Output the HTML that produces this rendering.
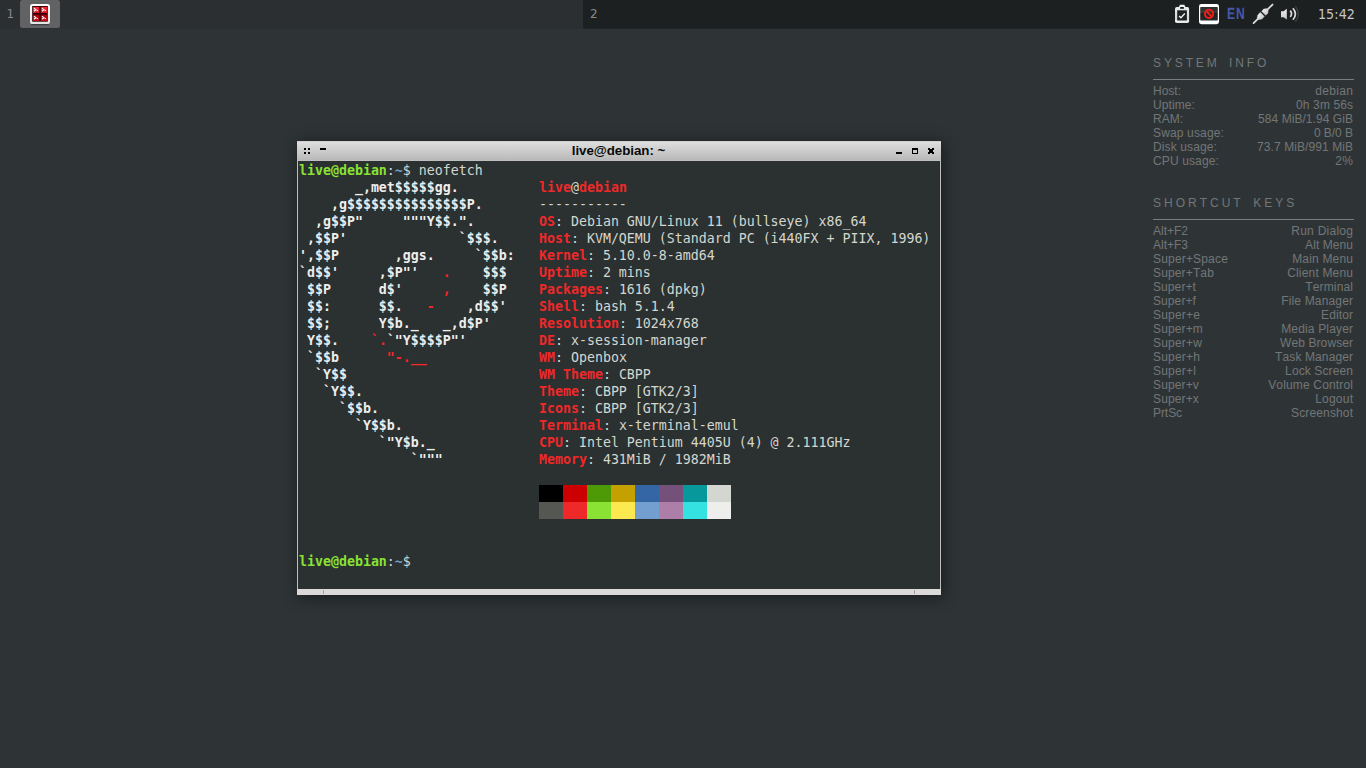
<!DOCTYPE html>
<html><head><meta charset="utf-8"><title>desktop</title>
<style>
*{margin:0;padding:0;box-sizing:border-box}
html,body{width:1366px;height:768px;overflow:hidden;background:#2e3436}
body{position:relative;font-family:"Liberation Sans",sans-serif}
#panel{position:absolute;left:0;top:0;width:1366px;height:28px;background:#1c2021}
#pb{position:absolute;left:0;top:28px;width:1366px;height:1px;background:linear-gradient(90deg,#2c3032 583px,#222628 583px)}
#d1{position:absolute;left:0;top:0;width:583px;height:28px;background:#2b2f31}
.dn{position:absolute;top:6px;font-family:"DejaVu Sans",sans-serif;font-size:12px;line-height:16px;color:#868989}
#task{position:absolute;left:20px;top:0;width:40px;height:28px;background:#606264;border-radius:2.5px}
#clock{position:absolute;left:1317.9px;top:5px;font-family:"DejaVu Sans",sans-serif;font-stretch:condensed;font-size:14.1px;letter-spacing:0.12px;line-height:18px;color:#c6c7c7;white-space:pre}
#lang{position:absolute;left:1227.2px;top:4.2px;font-family:"Liberation Sans",sans-serif;font-weight:bold;font-size:15.5px;line-height:18px;color:#4658aa;transform:rotate(0.03deg) scale(0.78,1.045);transform-origin:0 0;letter-spacing:1.2px;white-space:pre}
#win{position:absolute;left:297px;top:141px;width:644px;height:454px;background:#dcdad8;box-shadow:2px 2px 14px 1px rgba(0,0,0,.46)}
#tb{position:absolute;left:0;top:0;width:644px;height:20px;background:linear-gradient(#dedede,#b9b9b9);border-top:1px solid #d2cfcc;border-bottom:1px solid #bfbfbf}
#title{position:absolute;left:274.8px;top:1px;font-weight:bold;font-size:13.33px;letter-spacing:-0.05px;line-height:15px;color:#0a0a0a;white-space:pre;font-kerning:none}
#term{position:absolute;left:1px;top:20px;width:642px;height:428px;background:#2b3031;overflow:hidden;font-family:"DejaVu Sans Mono",monospace;font-size:13.288px}
.ln{position:absolute;white-space:pre;line-height:17px;height:17px}
.w{color:#eeeeec;font-weight:bold}.r{color:#ef2929;font-weight:bold}.n{color:#d3d7cf}.g{color:#8ae234;font-weight:bold}.b{color:#729fcf;font-weight:bold}
.sw{position:absolute;width:24px;height:17px}
.px{position:absolute;background:#000}
#conky{position:absolute;left:1153px;top:0;width:200px;color:#737677;font-size:12px}
.ct{position:absolute;left:0;font-size:12px;line-height:14px;white-space:pre;font-kerning:none}
.hr{position:absolute;left:0;width:201px;height:1px;background:#7b7e7f}
.cl{position:absolute;left:0;width:200px;line-height:14px;height:14px;white-space:pre;font-kerning:none}
.rt{position:absolute;right:0;top:0}
</style></head><body>
<div id="pb"></div>
<div id="panel"><div id="d1"></div>
<div class="dn" style="left:6.6px">1</div><div class="dn" style="left:590px">2</div>
<div id="task"></div>
<svg id="picons" width="1366" height="28" viewBox="0 0 1366 28" style="position:absolute;left:0;top:0">
<defs>
<linearGradient id="gw" x1="0" y1="0" x2="0" y2="1"><stop offset="0" stop-color="#ffffff"/><stop offset="1" stop-color="#e4e4e4"/></linearGradient>
<linearGradient id="gr1" x1="0" y1="0" x2="0" y2="1"><stop offset="0" stop-color="#f22c38"/><stop offset="1" stop-color="#dc1424"/></linearGradient>
<linearGradient id="gr2" x1="0" y1="0" x2="0" y2="1"><stop offset="0" stop-color="#a8000c"/><stop offset="1" stop-color="#cc0616"/></linearGradient>
<linearGradient id="gs" x1="0" y1="0" x2="0" y2="1"><stop offset="0" stop-color="#2e2e2e"/><stop offset="0.42" stop-color="#3a3a3a"/><stop offset="0.46" stop-color="#202020"/><stop offset="1" stop-color="#2a2a2a"/></linearGradient>
<linearGradient id="gp" x1="0" y1="0" x2="0" y2="1"><stop offset="0" stop-color="#ededed"/><stop offset="1" stop-color="#c9c9c9"/></linearGradient>
<linearGradient id="gc" x1="0" y1="0" x2="0" y2="1"><stop offset="0" stop-color="#ececec"/><stop offset="0.8" stop-color="#d6d6d6"/><stop offset="0.86" stop-color="#f4f4f4"/><stop offset="1" stop-color="#e2e2e2"/></linearGradient>
</defs>
<!-- terminal icon -->
<rect x="31" y="23.4" width="18" height="1.8" rx="0.9" fill="#000" opacity=".35"/>
<rect x="30" y="4" width="20" height="20" rx="2.6" fill="url(#gw)"/>
<rect x="32.2" y="6" width="15.6" height="15.7" fill="#300004"/>
<rect x="33" y="6.9" width="6.2" height="6.1" fill="url(#gr1)"/><rect x="40.8" y="6.9" width="6.3" height="6.1" fill="url(#gr1)"/>
<rect x="33" y="14.7" width="6.2" height="6.3" fill="url(#gr2)"/><rect x="40.8" y="14.7" width="6.3" height="6.3" fill="url(#gr2)"/>
<g fill="none" stroke="#fff" stroke-width="1.1">
<polyline points="34,8.2 36,9.7 34,11.2"/><polyline points="42,8.2 44,9.7 42,11.2"/>
<polyline points="34,16.2 36,17.7 34,19.2"/><polyline points="42,16.2 44,17.7 42,19.2"/>
</g>
<g fill="#fff"><rect x="36.7" y="10.1" width="1.4" height="1"/><rect x="44.7" y="10.1" width="1.4" height="1"/><rect x="36.7" y="18.1" width="1.4" height="1"/><rect x="44.7" y="18.1" width="1.4" height="1"/></g>
<!-- clipboard -->
<path d="M1178.6 7.6 L1180 4.8 H1184.3 L1185.7 7.6 Z" fill="#f2f2f2"/>
<rect x="1175" y="7.1" width="14.1" height="15.9" rx="1.8" fill="url(#gc)"/>
<rect x="1180.1" y="7.1" width="3.8" height="1.7" rx="0.4" fill="#0c0e0f"/>
<rect x="1177.2" y="10.3" width="9.7" height="10.2" fill="#1e2224"/>
<polyline points="1179.1,16.1 1180.9,17.7 1184.8,13.5" fill="none" stroke="#f0f0f0" stroke-width="1.35"/>
<!-- display -->
<rect x="1199" y="4" width="20" height="20.2" rx="2.4" fill="#ffffff"/>
<rect x="1200.2" y="7.1" width="17.6" height="13.5" rx="0.8" fill="url(#gs)"/>
<circle cx="1209" cy="13.9" r="4.05" fill="none" stroke="#ea1f19" stroke-width="2"/>
<line x1="1206.1" y1="11" x2="1211.9" y2="16.8" stroke="#ea1f19" stroke-width="2"/>
<!-- plug -->
<g transform="translate(1263 13.85) rotate(-44.3)">
<line x1="-13.2" y1="0" x2="-5" y2="0" stroke="#dcdcdc" stroke-width="1.8" stroke-linecap="round"/>
<line x1="5" y1="0" x2="13.3" y2="0" stroke="#dcdcdc" stroke-width="1.8" stroke-linecap="round"/>
<path d="M-0.95 -2.85 H-4.4 L-7.2 -0.9 V0.9 L-4.4 2.85 H-0.95 Z" fill="url(#gp)" stroke="url(#gp)" stroke-width="0.5" stroke-linejoin="round"/>
<path d="M0.95 -2.85 H3.9 L6.4 -0.9 V0.9 L3.9 2.85 H0.95 Z" fill="url(#gp)" stroke="url(#gp)" stroke-width="0.5" stroke-linejoin="round"/>
</g>
<!-- speaker -->
<path d="M1281 11.3 H1283.6 L1286.8 8.7 V19.4 L1283.6 17.2 H1281 Z" fill="url(#gp)"/>
<path d="M1290.2 10.6 Q1292.9 13.8 1290.2 16.9" fill="none" stroke="#dcdcdc" stroke-width="1.7"/>
<path d="M1292.9 8.3 Q1297.9 14 1292.9 19.8" fill="none" stroke="#dcdcdc" stroke-width="1.7"/>
<path d="M1295.3 6.2 Q1301.6 14 1295.3 21.7" fill="none" stroke="#3a3f40" stroke-width="1.4"/>
</svg>

<div id="lang">EN</div>
<div id="clock">15:42</div>
</div>
<div id="conky">
<div class="ct" style="top:56px;letter-spacing:-0.228px">S Y S T E M    I N F O</div><div class="hr" style="top:79px"></div>
<div class="cl" style="top:84px"><span style="letter-spacing:-0.002px">Host:</span><span class="rt" style="letter-spacing:0.327px;margin-right:-0.327px">debian</span></div>
<div class="cl" style="top:98px"><span style="letter-spacing:0.094px">Uptime:</span><span class="rt" style="letter-spacing:0.107px;margin-right:-0.107px">0h 3m 56s</span></div>
<div class="cl" style="top:112px"><span style="letter-spacing:0.000px">RAM:</span><span class="rt" style="letter-spacing:0.059px;margin-right:-0.059px">584 MiB/1.94 GiB</span></div>
<div class="cl" style="top:126px"><span style="letter-spacing:0.147px">Swap usage:</span><span class="rt" style="letter-spacing:-0.051px;margin-right:0.051px">0 B/0 B</span></div>
<div class="cl" style="top:140px"><span style="letter-spacing:0.119px">Disk usage:</span><span class="rt" style="letter-spacing:0.081px;margin-right:-0.081px">73.7 MiB/991 MiB</span></div>
<div class="cl" style="top:154px"><span style="letter-spacing:0.130px">CPU usage:</span><span class="rt" style="letter-spacing:0.328px;margin-right:-0.328px">2%</span></div>
<div class="ct" style="top:196px;letter-spacing:-0.167px">S H O R T C U T    K E Y S</div><div class="hr" style="top:219px"></div>
<div class="cl" style="top:224px"><span style="letter-spacing:-0.003px">Alt+F2</span><span class="rt" style="letter-spacing:0.263px;margin-right:-0.263px">Run Dialog</span></div>
<div class="cl" style="top:238px"><span style="letter-spacing:-0.003px">Alt+F3</span><span class="rt" style="letter-spacing:0.081px;margin-right:-0.081px">Alt Menu</span></div>
<div class="cl" style="top:252px"><span style="letter-spacing:0.177px">Super+Space</span><span class="rt" style="letter-spacing:0.182px;margin-right:-0.182px">Main Menu</span></div>
<div class="cl" style="top:266px"><span style="letter-spacing:0.144px">Super+Tab</span><span class="rt" style="letter-spacing:0.179px;margin-right:-0.179px">Client Menu</span></div>
<div class="cl" style="top:280px"><span style="letter-spacing:0.091px">Super+t</span><span class="rt" style="letter-spacing:0.166px;margin-right:-0.166px">Terminal</span></div>
<div class="cl" style="top:294px"><span style="letter-spacing:0.091px">Super+f</span><span class="rt" style="letter-spacing:0.164px;margin-right:-0.164px">File Manager</span></div>
<div class="cl" style="top:308px"><span style="letter-spacing:0.185px">Super+e</span><span class="rt" style="letter-spacing:0.109px;margin-right:-0.109px">Editor</span></div>
<div class="cl" style="top:322px"><span style="letter-spacing:0.139px">Super+m</span><span class="rt" style="letter-spacing:0.164px;margin-right:-0.164px">Media Player</span></div>
<div class="cl" style="top:336px"><span style="letter-spacing:0.186px">Super+w</span><span class="rt" style="letter-spacing:0.089px;margin-right:-0.089px">Web Browser</span></div>
<div class="cl" style="top:350px"><span style="letter-spacing:0.185px">Super+h</span><span class="rt" style="letter-spacing:0.108px;margin-right:-0.108px">Task Manager</span></div>
<div class="cl" style="top:364px"><span style="letter-spacing:0.186px">Super+l</span><span class="rt" style="letter-spacing:0.118px;margin-right:-0.118px">Lock Screen</span></div>
<div class="cl" style="top:378px"><span style="letter-spacing:0.139px">Super+v</span><span class="rt" style="letter-spacing:0.164px;margin-right:-0.164px">Volume Control</span></div>
<div class="cl" style="top:392px"><span style="letter-spacing:0.139px">Super+x</span><span class="rt" style="letter-spacing:0.216px;margin-right:-0.216px">Logout</span></div>
<div class="cl" style="top:406px"><span style="letter-spacing:-0.068px">PrtSc</span><span class="rt" style="letter-spacing:0.130px;margin-right:-0.130px">Screenshot</span></div>

</div>
<div id="win">
<div id="tb"><div id="title">live@debian: ~</div>
<div class="px" style="left:7px;top:6px;width:2px;height:2px"></div><div class="px" style="left:11px;top:6px;width:2px;height:2px"></div><div class="px" style="left:7px;top:10px;width:2px;height:2px"></div><div class="px" style="left:11px;top:10px;width:2px;height:2px"></div>
<div class="px" style="left:23px;top:6px;width:6px;height:2px"></div>
<div class="px" style="left:599px;top:10px;width:6px;height:2px"></div>
<div class="px" style="left:615px;top:6px;width:6px;height:6px"></div><div class="px" style="left:616px;top:8px;width:4px;height:3px;background:#c9c9c9"></div>
<div class="px" style="left:631px;top:6px;width:2px;height:2px"></div><div class="px" style="left:635px;top:6px;width:2px;height:2px"></div><div class="px" style="left:631px;top:7px;width:6px;height:1px"></div><div class="px" style="left:632px;top:8px;width:4px;height:2px"></div><div class="px" style="left:631px;top:10px;width:6px;height:1px"></div><div class="px" style="left:631px;top:10px;width:2px;height:2px"></div><div class="px" style="left:635px;top:10px;width:2px;height:2px"></div>

</div>
<div class="px" style="left:26px;top:449px;width:1px;height:4px;background:#a9a5a1"></div><div class="px" style="left:617px;top:449px;width:1px;height:4px;background:#a9a5a1"></div>
<div class="px" style="left:0;top:20px;width:1px;height:428px;background:#c0bebb"></div><div class="px" style="left:643px;top:20px;width:1px;height:428px;background:#c0bebb"></div>
<div id="term">
<div class="ln" style="top:1px;left:1px"><span class="g">live@debian</span><span class="n">:</span><span class="b">~</span><span class="n">$ neofetch</span></div>
<div class="ln" style="top:18px;left:1px"><span class="w">       _,met$$$$$gg.</span></div>
<div class="ln" style="top:35px;left:1px"><span class="w">    ,g$$$$$$$$$$$$$$$P.</span></div>
<div class="ln" style="top:52px;left:1px"><span class="w">  ,g$$P"     """Y$$.".</span></div>
<div class="ln" style="top:69px;left:1px"><span class="w"> ,$$P'              `$$$.</span></div>
<div class="ln" style="top:86px;left:1px"><span class="w">',$$P       ,ggs.     `$$b:</span></div>
<div class="ln" style="top:103px;left:1px"><span class="w">`d$$'     ,$P"'   </span><span class="r">.</span><span class="w">    $$$</span></div>
<div class="ln" style="top:120px;left:1px"><span class="w"> $$P      d$'     </span><span class="r">,</span><span class="w">    $$P</span></div>
<div class="ln" style="top:137px;left:1px"><span class="w"> $$:      $$.   </span><span class="r">-</span><span class="w">    ,d$$'</span></div>
<div class="ln" style="top:154px;left:1px"><span class="w"> $$;      Y$b._   _,d$P'</span></div>
<div class="ln" style="top:171px;left:1px"><span class="w"> Y$$.    </span><span class="r">`.</span><span class="w">`"Y$$$$P"'</span></div>
<div class="ln" style="top:188px;left:1px"><span class="w"> `$$b      </span><span class="r">"-.__</span></div>
<div class="ln" style="top:205px;left:1px"><span class="w">  `Y$$</span></div>
<div class="ln" style="top:222px;left:1px"><span class="w">   `Y$$.</span></div>
<div class="ln" style="top:239px;left:1px"><span class="w">     `$$b.</span></div>
<div class="ln" style="top:256px;left:1px"><span class="w">       `Y$$b.</span></div>
<div class="ln" style="top:273px;left:1px"><span class="w">          `"Y$b._</span></div>
<div class="ln" style="top:290px;left:1px"><span class="w">              `"""</span></div>
<div class="ln" style="top:18px;left:241px"><span class="r">live</span><span class="n">@</span><span class="r">debian</span></div>
<div class="ln" style="top:35px;left:241px"><span class="n">-----------</span></div>
<div class="ln" style="top:52px;left:241px"><span class="r">OS</span><span class="n">: Debian GNU/Linux 11 (bullseye) x86_64</span></div>
<div class="ln" style="top:69px;left:241px"><span class="r">Host</span><span class="n">: KVM/QEMU (Standard PC (i440FX + PIIX, 1996)</span></div>
<div class="ln" style="top:86px;left:241px"><span class="r">Kernel</span><span class="n">: 5.10.0-8-amd64</span></div>
<div class="ln" style="top:103px;left:241px"><span class="r">Uptime</span><span class="n">: 2 mins</span></div>
<div class="ln" style="top:120px;left:241px"><span class="r">Packages</span><span class="n">: 1616 (dpkg)</span></div>
<div class="ln" style="top:137px;left:241px"><span class="r">Shell</span><span class="n">: bash 5.1.4</span></div>
<div class="ln" style="top:154px;left:241px"><span class="r">Resolution</span><span class="n">: 1024x768</span></div>
<div class="ln" style="top:171px;left:241px"><span class="r">DE</span><span class="n">: x-session-manager</span></div>
<div class="ln" style="top:188px;left:241px"><span class="r">WM</span><span class="n">: Openbox</span></div>
<div class="ln" style="top:205px;left:241px"><span class="r">WM Theme</span><span class="n">: CBPP</span></div>
<div class="ln" style="top:222px;left:241px"><span class="r">Theme</span><span class="n">: CBPP [GTK2/3]</span></div>
<div class="ln" style="top:239px;left:241px"><span class="r">Icons</span><span class="n">: CBPP [GTK2/3]</span></div>
<div class="ln" style="top:256px;left:241px"><span class="r">Terminal</span><span class="n">: x-terminal-emul</span></div>
<div class="ln" style="top:273px;left:241px"><span class="r">CPU</span><span class="n">: Intel Pentium 4405U (4) @ 2.111GHz</span></div>
<div class="ln" style="top:290px;left:241px"><span class="r">Memory</span><span class="n">: 431MiB / 1982MiB</span></div>
<div class="ln" style="top:392px;left:1px"><span class="g">live@debian</span><span class="n">:</span><span class="b">~</span><span class="n">$ </span></div>
<div class="sw" style="left:241px;top:324px;background:#000000"></div><div class="sw" style="left:265px;top:324px;background:#cc0000"></div><div class="sw" style="left:289px;top:324px;background:#4e9a06"></div><div class="sw" style="left:313px;top:324px;background:#c4a000"></div><div class="sw" style="left:337px;top:324px;background:#3465a4"></div><div class="sw" style="left:361px;top:324px;background:#75507b"></div><div class="sw" style="left:385px;top:324px;background:#06989a"></div><div class="sw" style="left:409px;top:324px;background:#d3d7cf"></div><div class="sw" style="left:241px;top:341px;background:#555753"></div><div class="sw" style="left:265px;top:341px;background:#ef2929"></div><div class="sw" style="left:289px;top:341px;background:#8ae234"></div><div class="sw" style="left:313px;top:341px;background:#fce94f"></div><div class="sw" style="left:337px;top:341px;background:#729fcf"></div><div class="sw" style="left:361px;top:341px;background:#ad7fa8"></div><div class="sw" style="left:385px;top:341px;background:#34e2e2"></div><div class="sw" style="left:409px;top:341px;background:#eeeeec"></div>
</div>
</div>
</body></html>
